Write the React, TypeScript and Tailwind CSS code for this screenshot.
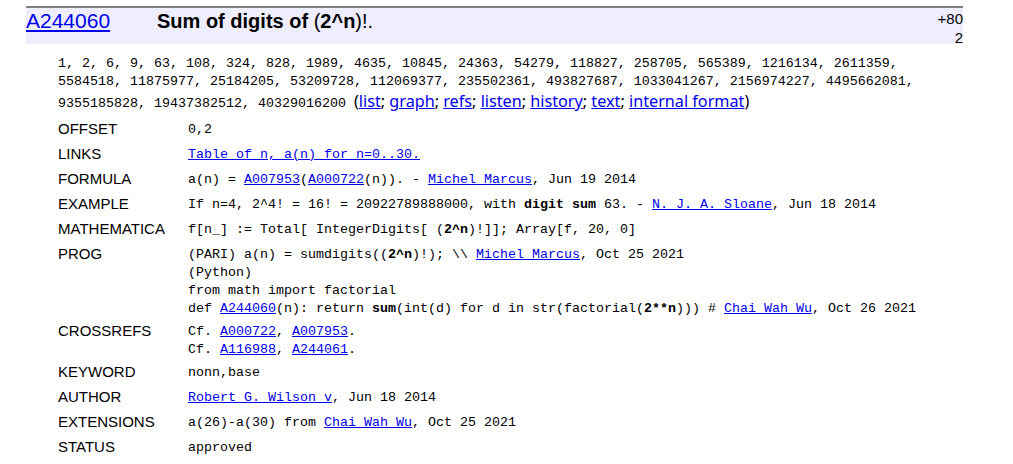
import React from "react";

const mono = { fontFamily: '"Liberation Mono", "Courier New", monospace' };

function L({ children }: { children: React.ReactNode }) {
  return <a href="#" className="text-[#0000ee] underline">{children}</a>;
}

function Row({ label, children }: { label: string; children: React.ReactNode }) {
  return (
    <div className="flex items-start pt-[2px] pb-[3px]">
      <div className="w-[130px] shrink-0 text-[15px] leading-[16px] pb-[4px] font-['Liberation_Sans',Arial,sans-serif]">{label}</div>
      <div className="text-[13.33px] leading-[18px] whitespace-pre font-['Liberation_Mono','Courier_New',monospace]">{children}</div>
    </div>
  );
}

export default function App() {
  return (
    <div className="bg-white text-black w-[1013px] h-[464px] overflow-hidden pt-[6px] font-['Liberation_Sans',Arial,sans-serif]">
      <div className="ml-[26px] w-[937px]">
        <div className="border-t-2 border-[#808080] bg-[#eeeeff] h-[38px] flex items-start">
          <div className="w-[131px] shrink-0 text-[21px] leading-[24px] pt-[1px]">
            <L>A244060</L>
          </div>
          <div className="flex-1 text-[20px] leading-[24px] pt-[1px]">
            <b>Sum of digits of </b>(<b>2^n</b>)!.
          </div>
          <div className="text-right text-[15px] leading-[19px] pt-[1px]">
            <div>+80</div>
            <div>2</div>
          </div>
        </div>
        <div className="pl-[32px] pt-[11px]">
          <div className="text-[13.33px] leading-[18px] whitespace-pre" style={mono}>
            1, 2, 6, 9, 63, 108, 324, 828, 1989, 4635, 10845, 24363, 54279, 118827, 258705, 565389, 1216134, 2611359,
          </div>
          <div className="text-[13.33px] leading-[18px] whitespace-pre" style={mono}>
            5584518, 11875977, 25184205, 53209728, 112069377, 235502361, 493827687, 1033041267, 2156974227, 4495662081,
          </div>
          <div className="leading-[21px] whitespace-pre">
            <span className="text-[13.33px]" style={mono}>9355185828, 19437382512, 40329016200 </span>
            <span className="text-[16.2px] font-['Noto_Sans',sans-serif]">
              (<L>list</L>; <L>graph</L>; <L>refs</L>; <L>listen</L>; <L>history</L>; <L>text</L>; <L>internal format</L>)
            </span>
          </div>
          <div className="mt-[5px]">
            <Row label="OFFSET">0,2</Row>
            <Row label="LINKS"><L>Table of n, a(n) for n=0..30.</L></Row>
            <Row label="FORMULA">a(n) = <L>A007953</L>(<L>A000722</L>(n)). - <L>Michel Marcus</L>, Jun 19 2014</Row>
            <Row label="EXAMPLE">If n=4, 2^4! = 16! = 20922789888000, with <b>digit sum</b> 63. - <L>N. J. A. Sloane</L>, Jun 18 2014</Row>
            <Row label="MATHEMATICA">f[n_] := Total[ IntegerDigits[ (<b>2^n</b>)!]]; Array[f, 20, 0]</Row>
            <Row label="PROG">
              <div>(PARI) a(n) = sumdigits((<b>2^n</b>)!); \\ <L>Michel Marcus</L>, Oct 25 2021</div>
              <div>(Python)</div>
              <div>from math import factorial</div>
              <div>def <L>A244060</L>(n): return <b>sum</b>(int(d) for d in str(factorial(<b>2**n</b>))) # <L>Chai Wah Wu</L>, Oct 26 2021</div>
            </Row>
            <Row label="CROSSREFS">
              <div>Cf. <L>A000722</L>, <L>A007953</L>.</div>
              <div>Cf. <L>A116988</L>, <L>A244061</L>.</div>
            </Row>
            <Row label="KEYWORD">nonn,base</Row>
            <Row label="AUTHOR"><L>Robert G. Wilson v</L>, Jun 18 2014</Row>
            <Row label="EXTENSIONS">a(26)-a(30) from <L>Chai Wah Wu</L>, Oct 25 2021</Row>
            <Row label="STATUS">approved</Row>
          </div>
        </div>
      </div>
    </div>
  );
}
